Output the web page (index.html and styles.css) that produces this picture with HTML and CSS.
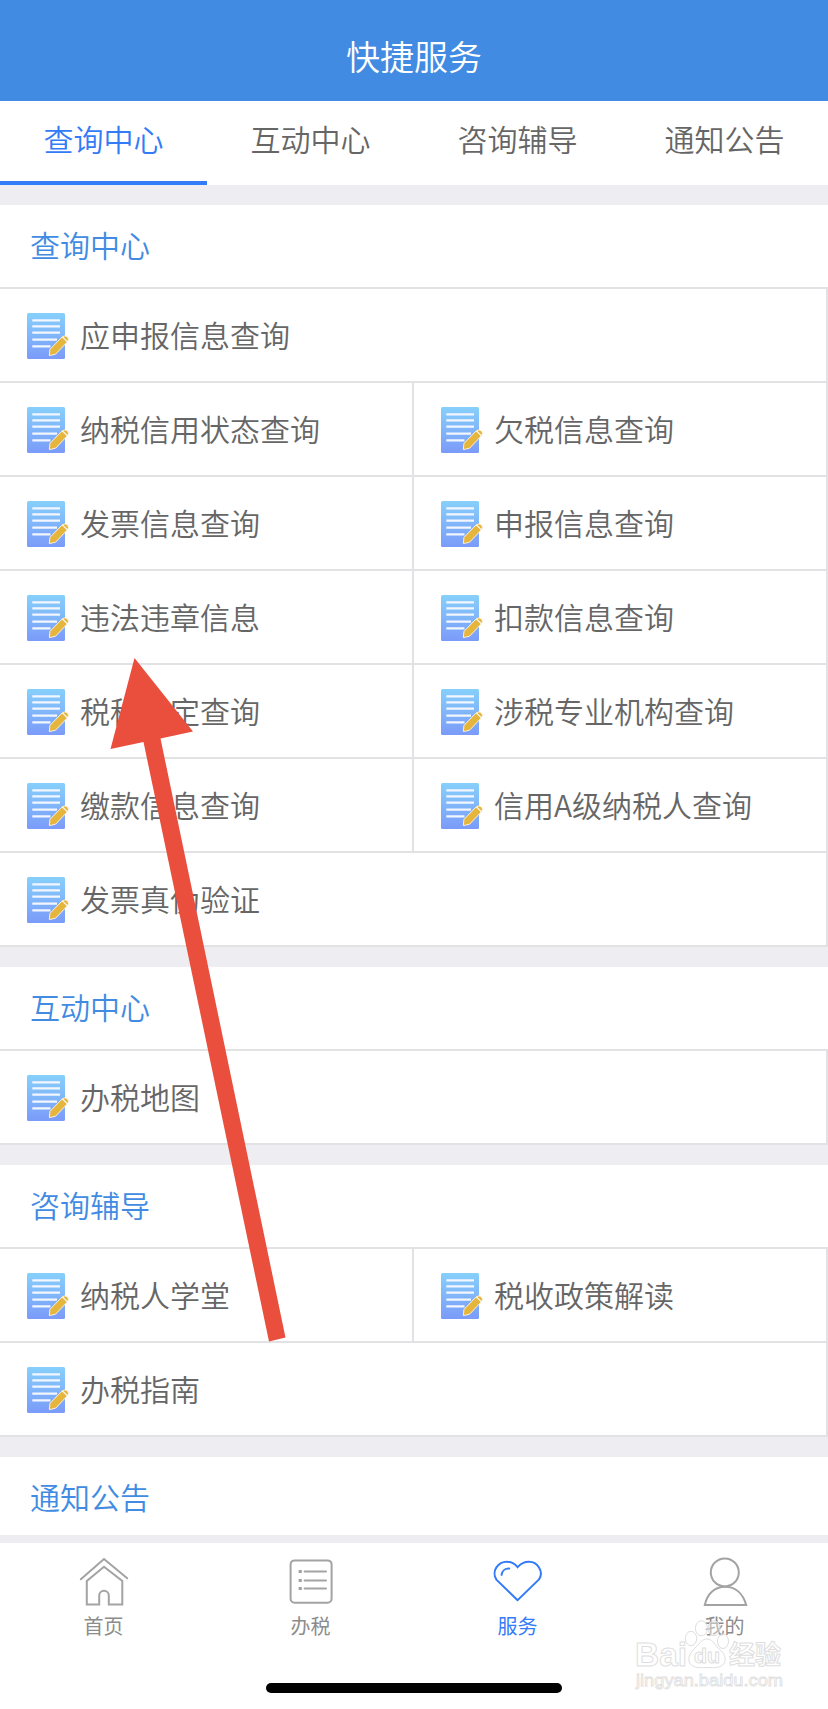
FILE: index.html
```html
<!DOCTYPE html>
<html lang="zh-CN">
<head>
    <meta charset="UTF-8">
    <meta name="viewport" content="width=device-width, initial-scale=1.0">
    <title>快捷服务</title>
    <link rel="stylesheet" href="styles.css">
</head>
<body>

<svg class="sprite" aria-hidden="true">
    <defs>
        <linearGradient id="paper" x1="0" y1="0" x2="0" y2="1">
            <stop offset="0" stop-color="#86d0fb"/>
            <stop offset="1" stop-color="#7b9bf9"/>
        </linearGradient>
        <symbol id="doc" viewBox="0 0 43 46">
            <rect x="0" y="0" width="38" height="46" rx="1.5" fill="url(#paper)"/>
            <path d="M5.3 7.4H33M5.3 13.4H33M5.3 19.7H33M5.3 26.7H30M5.3 33.4H23.5" stroke="#f3f6fd" stroke-width="2.3" fill="none"/>
            <path d="M22.3 42.6L23 36.3L35.3 23.8Q38 21.8 40.6 24Q42.4 26.2 40.6 28.6L28.6 41.2Z" fill="#e6b53c" stroke="#fbf0dc" stroke-width="1"/>
            <path d="M35.4 23.8L40.4 28.8" stroke="#fff" stroke-width="1.2"/>
        </symbol>
    </defs>
</svg>

<header class="header">快捷服务</header>

<nav class="tabs">
    <a class="tab active">查询中心</a>
    <a class="tab">互动中心</a>
    <a class="tab">咨询辅导</a>
    <a class="tab">通知公告</a>
</nav>

<main class="content">
    <section class="section">
        <h2 class="section-title">查询中心</h2>
        <div class="grid">
            <div class="item wide"><svg class="doc"><use href="#doc"/></svg><span>应申报信息查询</span></div>
            <div class="item"><svg class="doc"><use href="#doc"/></svg><span>纳税信用状态查询</span></div>
            <div class="item"><svg class="doc"><use href="#doc"/></svg><span>欠税信息查询</span></div>
            <div class="item"><svg class="doc"><use href="#doc"/></svg><span>发票信息查询</span></div>
            <div class="item"><svg class="doc"><use href="#doc"/></svg><span>申报信息查询</span></div>
            <div class="item"><svg class="doc"><use href="#doc"/></svg><span>违法违章信息</span></div>
            <div class="item"><svg class="doc"><use href="#doc"/></svg><span>扣款信息查询</span></div>
            <div class="item"><svg class="doc"><use href="#doc"/></svg><span>税种认定查询</span></div>
            <div class="item"><svg class="doc"><use href="#doc"/></svg><span>涉税专业机构查询</span></div>
            <div class="item"><svg class="doc"><use href="#doc"/></svg><span>缴款信息查询</span></div>
            <div class="item"><svg class="doc"><use href="#doc"/></svg><span>信用A级纳税人查询</span></div>
            <div class="item wide"><svg class="doc"><use href="#doc"/></svg><span>发票真伪验证</span></div>
        </div>
    </section>

    <section class="section">
        <h2 class="section-title">互动中心</h2>
        <div class="grid">
            <div class="item wide"><svg class="doc"><use href="#doc"/></svg><span>办税地图</span></div>
        </div>
    </section>

    <section class="section">
        <h2 class="section-title">咨询辅导</h2>
        <div class="grid">
            <div class="item"><svg class="doc"><use href="#doc"/></svg><span>纳税人学堂</span></div>
            <div class="item"><svg class="doc"><use href="#doc"/></svg><span>税收政策解读</span></div>
            <div class="item wide"><svg class="doc"><use href="#doc"/></svg><span>办税指南</span></div>
        </div>
    </section>

    <section class="section">
        <h2 class="section-title">通知公告</h2>
    </section>
</main>

<footer class="bottom">
    <nav class="tabbar">
        <a class="tabbar-item">
            <svg class="tabbar-icon" viewBox="0 0 50 50">
                <path d="M1.8 23.3L25 3L48.2 22.3"/>
                <path d="M7.8 48.6V25L25 10.8L43.3 25V48.6H29.8V39.6A4.8 4.8 0 0 0 20.2 39.6V48.6Z"/>
            </svg>
            <span>首页</span>
        </a>
        <a class="tabbar-item">
            <svg class="tabbar-icon" viewBox="0 0 50 50">
                <rect x="4.6" y="4.4" width="41" height="42.4" rx="4"/>
                <path d="M18.6 15.4H40M18.6 24.4H40M18.6 32.4H40"/>
                <path d="M12.6 15.4H15.8M12.6 24.4H15.8M12.6 32.4H15.8" class="dots"/>
            </svg>
            <span>办税</span>
        </a>
        <a class="tabbar-item active">
            <svg class="tabbar-icon" viewBox="0 0 50 50">
                <path d="M24.6 44.2L3.4 23.6C1 20 1 15 3.4 11.4C8.4 4 19 4 24.6 11.2C31 4 41.5 4 46 11.4C48.6 15.5 48.3 20 46 23.4Z"/>
                <path d="M8.6 18.8C9 15 12 12.4 16.2 12.6"/>
            </svg>
            <span>服务</span>
        </a>
        <a class="tabbar-item">
            <svg class="tabbar-icon" viewBox="0 0 50 50">
                <circle cx="24.8" cy="16.4" r="14"/>
                <path d="M4.8 49C7.4 37.5 14.9 30.8 25 30.8S42.9 37.5 46.2 49Z"/>
            </svg>
            <span>我的</span>
        </a>
    </nav>
    <div class="home-bar"></div>
</footer>

<svg class="arrow" viewBox="0 0 176 684">
    <path d="M24.5 0L83 73.5L50.5 80.5L175.5 679.5L159 683.5L33.5 84L0.5 91Z"/>
</svg>

<svg class="watermark" viewBox="0 0 160 80">
    <g class="paw">
        <ellipse cx="61" cy="20.5" rx="5.7" ry="7.2"/>
        <ellipse cx="71.4" cy="10.3" rx="6" ry="7.5"/>
        <ellipse cx="84" cy="10.3" rx="6" ry="7.5"/>
        <ellipse cx="93" cy="23.3" rx="5.5" ry="7.2"/>
        <path d="M77 21C82 21 84 25 88 30C93 34 96 38 95 43C93 50 86 50 77 49.5C68 50 61 50 59 43C58 37 62 33 66 29C70 25 72 21 77 21Z"/>
    </g>
    <text class="wm-logo" x="5" y="48" textLength="52" lengthAdjust="spacingAndGlyphs">Bai</text>
    <text class="wm-du" x="64" y="45" textLength="26" lengthAdjust="spacingAndGlyphs">du</text>
    <text class="wm-cn" x="99" y="46">经验</text>
    <text class="wm-url" x="6" y="68" textLength="147" lengthAdjust="spacingAndGlyphs">jingyan.baidu.com</text>
</svg>

</body>
</html>
```

FILE: styles.css
```css
* {
    box-sizing: border-box;
}
body {
    display: flex;
    flex-direction: column;
    height: 1709px;
    margin: 0;
    overflow: hidden;
    position: relative;
    font-family: "Noto Sans CJK SC", sans-serif;
    font-weight: 350;
    background-color: #eeedf2;
    color: #666;
}
.sprite {
    position: absolute;
    width: 0;
    height: 0;
}
.header {
    flex: none;
    height: 101px;
    padding-top: 13px;
    background-color: #418be2;
    color: white;
    font-size: 34px;
    line-height: 85px;
    text-align: center;
}
.tabs {
    display: flex;
    flex: none;
    height: 84px;
    background-color: white;
}
.tab {
    flex: 1;
    border-bottom: 4px solid transparent;
    font-size: 30px;
    line-height: 74px;
    text-align: center;
}
.tab.active {
    border-bottom-color: #347bf7;
    color: #347bf7;
}
.content {
    flex: 1;
    min-height: 0;
    overflow: hidden;
}
.section {
    margin-top: 20px;
    background-color: white;
}
.section-title {
    height: 84px;
    margin: 0;
    padding-left: 30px;
    border-bottom: 2px solid #e2e2e4;
    color: #418be2;
    font-size: 30px;
    font-weight: 350;
    line-height: 78px;
}
.grid {
    display: grid;
    grid-template-columns: 1fr 1fr;
}
.item {
    display: flex;
    align-items: center;
    gap: 10px;
    height: 94px;
    padding-left: 27px;
    border-right: 2px solid #e2e2e4;
    border-bottom: 2px solid #e2e2e4;
    font-size: 30px;
    line-height: 44px;
    white-space: nowrap;
}
.item span {
    padding-bottom: 2px;
}
.item.wide {
    grid-column: span 2;
}
.doc {
    width: 43px;
    height: 46px;
    margin-top: 2px;
}
.bottom {
    flex: none;
    height: 174px;
    border-top: 8px solid #eeedf2;
    background-color: white;
}
.tabbar {
    display: flex;
    height: 140px;
    padding-top: 13px;
}
.tabbar-item {
    display: flex;
    flex: 1;
    flex-direction: column;
    align-items: center;
    color: #8c8c8c;
    font-size: 20px;
    font-weight: 400;
    line-height: 40px;
}
.tabbar-item.active {
    color: #347bf7;
}
.tabbar-icon {
    width: 50px;
    height: 50px;
    fill: none;
    stroke: #a3a3a3;
    stroke-width: 2;
    stroke-linecap: round;
}
.tabbar-icon .dots {
    stroke-width: 3;
    stroke-linecap: butt;
}
.tabbar-item.active .tabbar-icon {
    stroke: #347bf7;
}
.home-bar {
    width: 296px;
    height: 10px;
    margin: 0 auto;
    border-radius: 5px;
    background-color: black;
}
.arrow {
    position: absolute;
    left: 110px;
    top: 658px;
    width: 176px;
    height: 684px;
    fill: #ea4e3d;
}
.watermark {
    position: absolute;
    left: 630px;
    top: 1618px;
    width: 160px;
    height: 80px;
    fill: rgba(255, 255, 255, 0.75);
    stroke: #dedede;
    stroke-width: 1;
}
.watermark text {
    font-family: "Liberation Sans", sans-serif;
    font-weight: bold;
}
.watermark .paw {
    fill: rgba(255, 255, 255, 0.4);
}
.watermark .wm-logo {
    font-size: 34px;
}
.watermark .wm-du {
    font-size: 21px;
}
.watermark .wm-cn {
    font-family: "Noto Sans CJK SC", sans-serif;
    font-size: 26px;
}
.watermark .wm-url {
    font-size: 17px;
    font-weight: normal;
    stroke-width: 0.8;
}
```
